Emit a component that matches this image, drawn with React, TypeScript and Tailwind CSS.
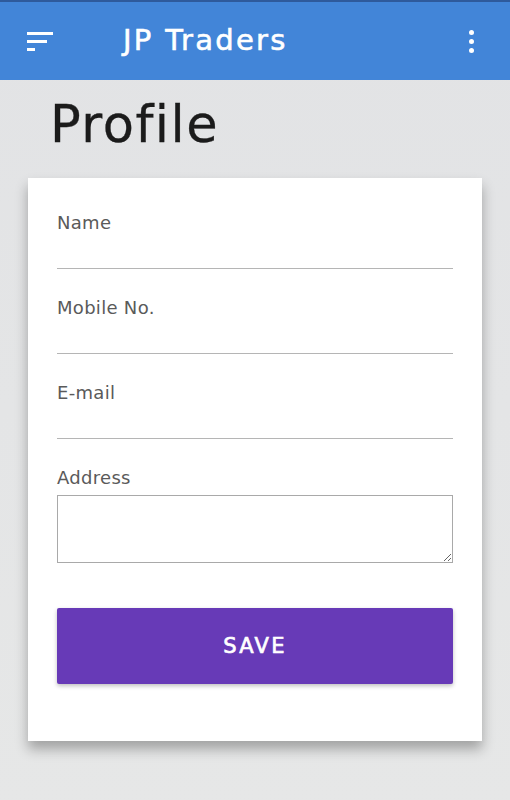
import React from 'react';

function Field({ label }: { label: string }) {
  return (
    <div className="flex flex-col">
      <label className="pt-[3px] text-[18px] leading-[20px] tracking-[0.3px] text-[#5a5a5a]">{label}</label>
      <input className="h-[36px] border-b border-[#b5b5b5] outline-none" />
    </div>
  );
}

export default function App() {
  return (
    <div
      className="min-h-[800px] w-full bg-gradient-to-b from-[#e2e3e5] to-[#e6e7e7]"
      style={{ fontFamily: '"DejaVu Sans", "Open Sans", sans-serif' }}
    >
      <header className="flex h-[80px] items-center border-t-2 border-[#2e5a9c] bg-[#4285d8] text-white">
        <button className="ml-[27px] flex w-[26px] flex-col gap-[5px]">
          <span className="h-[3px] w-[26px] bg-white" />
          <span className="h-[3px] w-[20px] bg-white" />
          <span className="h-[3px] w-[8px] bg-white" />
        </button>
        <h1 className="ml-[70px] text-[29px] tracking-[2.3px] [-webkit-text-stroke:0.6px_white]">JP Traders</h1>
        <button className="ml-auto mr-[36px] flex flex-col gap-[4px]">
          <span className="h-[5px] w-[5px] rounded-full bg-white" />
          <span className="h-[5px] w-[5px] rounded-full bg-white" />
          <span className="h-[5px] w-[5px] rounded-full bg-white" />
        </button>
      </header>

      <h2 className="ml-[50px] mt-[11px] text-[51px] leading-[68px] tracking-[1.5px] text-[#1b1b1b] [-webkit-text-stroke:0.3px_#1b1b1b]">
        Profile
      </h2>

      <div className="ml-[28px] mt-[19px] w-[454px] bg-white px-[29px] pb-[57px] pt-[32px] shadow-[0_8px_12px_rgba(0,0,0,0.3)]">
        <div className="flex flex-col gap-[26px]">
          <Field label="Name" />
          <Field label="Mobile No." />
          <Field label="E-mail" />
          <div className="flex flex-col">
            <label className="pt-[3px] text-[18px] leading-[20px] tracking-[0.3px] text-[#5a5a5a]">Address</label>
            <textarea className="mt-[7px] h-[68px] border border-[#a9a9a9] outline-none" />
          </div>
        </div>
        <button className="mt-[45px] flex h-[76px] w-full items-center justify-center rounded-[2px] bg-[#673ab7] pt-[2px] text-[21px] tracking-[2.3px] text-white shadow-[0_2px_4px_rgba(0,0,0,0.25)] [-webkit-text-stroke:0.7px_white]">
          SAVE
        </button>
      </div>
    </div>
  );
}
